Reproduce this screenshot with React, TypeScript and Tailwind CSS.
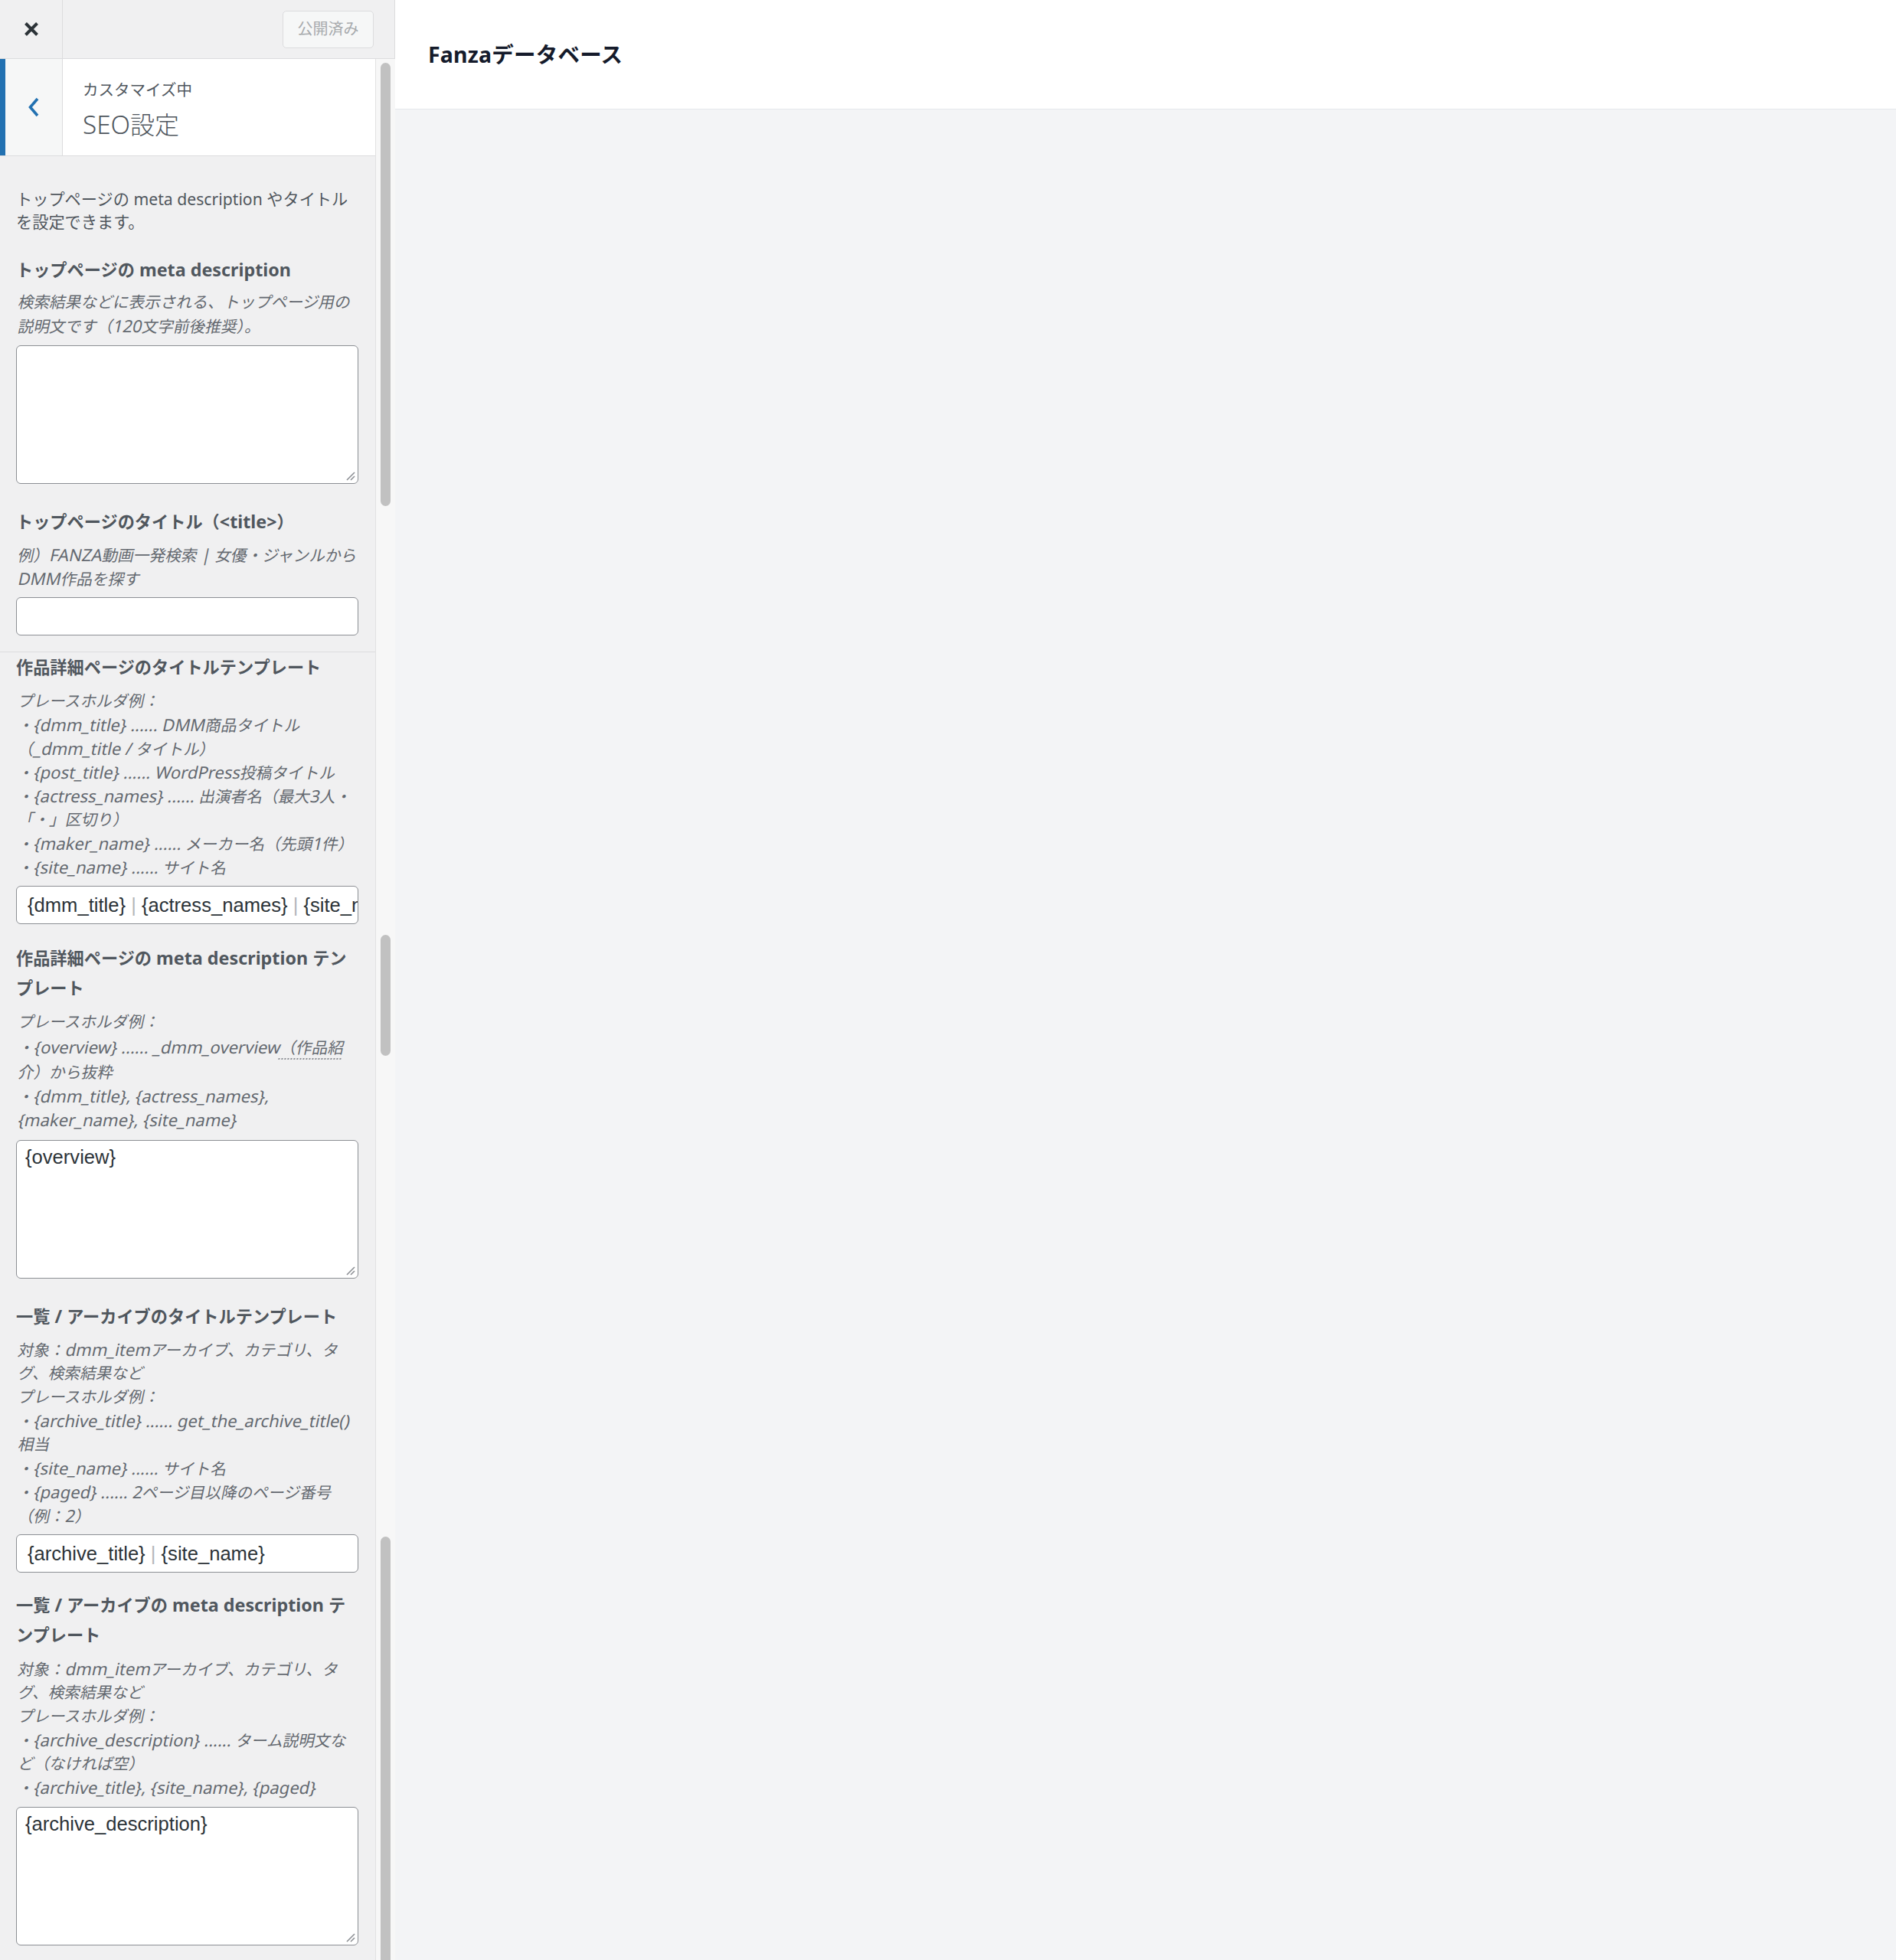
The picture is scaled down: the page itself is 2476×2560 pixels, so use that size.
import React from "react";

const FONT = "font-['Noto_Sans','Noto_Sans_CJK_JP',sans-serif]";
const INPUT_FONT = "font-['Liberation_Sans','Noto_Sans_CJK_JP',sans-serif]";

/* Latin runs are drawn a little larger, as the reference's Japanese UI font sets them */
function Mixed({ text, latin }: { text: string; latin: string }) {
  const parts = text.split(/([\u0000-\u024F]+)/);
  return (
    <>
      {parts.map((p, i) =>
        p === "" ? null : /^[\u0000-\u024F]+$/.test(p) ? (
          <span key={i} className={latin}>
            {p}
          </span>
        ) : (
          <React.Fragment key={i}>{p}</React.Fragment>
        )
      )}
    </>
  );
}

function Heading({ lines, className = "" }: { lines: string[]; className?: string }) {
  return (
    <div className={`text-[22.2px] font-bold leading-[40px] text-[#50575e] ${className}`}>
      {lines.map((l, i) => (
        <div key={i} className="h-[40px] whitespace-nowrap">
          <Mixed text={l} latin="text-[1.05em]" />
        </div>
      ))}
    </div>
  );
}

/* synthetic oblique: upright face skewed, like the browser's fake italic */
function Line({ children, className = "h-[31px] leading-[31px]" }: { children: React.ReactNode; className?: string }) {
  return <div className={`origin-bottom-left -skew-x-12 whitespace-nowrap ${className}`}>{children}</div>;
}

function Desc({ lines, className = "" }: { lines: string[]; className?: string }) {
  return (
    <div className={`mt-[8px] text-[20.7px] leading-[31px] text-[#646970] ${className}`}>
      {lines.map((l, i) => (
        <Line key={i}>
          <Mixed text={l} latin="text-[1.065em]" />
        </Line>
      ))}
    </div>
  );
}

function Sep() {
  return <span className="text-[#b4b7ba]">{"\u00a0|\u00a0"}</span>;
}

function TextInput({ children, className = "" }: { children?: React.ReactNode; className?: string }) {
  return (
    <div
      className={`mt-[9px] flex h-[50px] w-[447px] items-center overflow-hidden whitespace-nowrap rounded-[6px] border border-[#8c8f94] bg-white pl-[14px] text-[25.6px] text-[#2c3338] ${INPUT_FONT} ${className}`}
    >
      <span className="whitespace-nowrap">{children}</span>
    </div>
  );
}

function TextArea({ children, className = "" }: { children?: React.ReactNode; className?: string }) {
  return (
    <div
      className={`relative h-[181px] w-[447px] rounded-[6px] border border-[#8c8f94] bg-white px-[11px] pt-[6px] text-[25.6px] leading-[30px] text-[#2c3338] ${INPUT_FONT} ${className}`}
    >
      {children}
      <svg className="absolute bottom-[3px] right-[3px]" width="13" height="13" viewBox="0 0 13 13">
        <line x1="2" y1="12" x2="12" y2="2" stroke="#8c8f94" strokeWidth="1.6" />
        <line x1="7" y1="12" x2="12" y2="7" stroke="#8c8f94" strokeWidth="1.6" />
      </svg>
    </div>
  );
}

const L = "text-[1.065em]";

export default function App() {
  return (
    <div className={`flex h-[2560px] w-[2476px] overflow-hidden ${FONT}`}>
      {/* Sidebar */}
      <aside className="flex w-[516px] shrink-0 flex-col bg-[#f0f0f1]">
        {/* top bar */}
        <div className="flex h-[77px] shrink-0 items-center border-b border-r border-[#dcdcde] bg-[#f0f0f1]">
          <div className="flex h-full w-[82px] items-center justify-center border-r border-[#dcdcde]">
            <svg width="20" height="20" viewBox="0 0 20 20">
              <path d="M2.5 2.5 L17.5 17.5 M17.5 2.5 L2.5 17.5" stroke="#2c3338" strokeWidth="4" strokeLinecap="butt" />
            </svg>
          </div>
          <div className="flex-1" />
          <div className="mr-[27px] flex h-[49px] w-[119px] items-center justify-center rounded-[5px] border border-[#dcdcde] bg-[#f6f7f7] text-[20px] text-[#a7aaad]">
            公開済み
          </div>
        </div>

        <div className="flex min-h-0 flex-1">
          {/* content column */}
          <div className="flex w-[490px] shrink-0 flex-col">
            {/* section header */}
            <div className="flex h-[127px] shrink-0 border-b border-[#dcdcde] bg-white">
              <div className="flex w-[82px] items-center justify-center border-l-[7px] border-r border-l-[#2271b1] border-r-[#dcdcde] bg-[#f6f7f7]">
                <svg width="16" height="26" viewBox="0 0 16 26">
                  <path d="M13 2 L3.5 13 L13 24" fill="none" stroke="#2271b1" strokeWidth="3.6" />
                </svg>
              </div>
              <div className="flex flex-col pl-[26px] pt-[26px]">
                <div className="h-[28px] whitespace-nowrap text-[20.5px] leading-[28px] text-[#50575e]">カスタマイズ中</div>
                <div className="mt-[11px] h-[40px] whitespace-nowrap text-[32px] font-light leading-[40px] text-[#50575e]">
                  <span className="text-[1.04em]">SEO</span>設定
                </div>
              </div>
            </div>

            {/* section A */}
            <div className="border-b border-[#dcdcde] pb-[21px] pl-[21px] pt-[41px]">
              <div className="text-[21.2px] leading-[30px] text-[#50575e]">
                <div className="h-[30px] whitespace-nowrap">トップページの meta description やタイトル</div>
                <div className="h-[30px] whitespace-nowrap">を設定できます。</div>
              </div>

              <Heading className="mt-[27px]" lines={["トップページの meta description"]} />
              <Desc
                className="!mt-[7px]"
                lines={["検索結果などに表示される、トップページ用の", "説明文です（120文字前後推奨）。"]}
              />
              <TextArea className="mt-[10px]" />

              <Heading className="mt-[29px]" lines={["トップページのタイトル（<title>）"]} />
              <Desc lines={["例）FANZA動画一発検索 | 女優・ジャンルから", "DMM作品を探す"]} />
              <TextInput />
            </div>

            {/* section B */}
            <div className="pl-[21px]">
              <Heading lines={["作品詳細ページのタイトルテンプレート"]} />
              <Desc
                lines={[
                  "プレースホルダ例：",
                  "・{dmm_title} ...... DMM商品タイトル",
                  "（_dmm_title / タイトル）",
                  "・{post_title} ...... WordPress投稿タイトル",
                  "・{actress_names} ...... 出演者名（最大3人・",
                  "「・」区切り）",
                  "・{maker_name} ...... メーカー名（先頭1件）",
                  "・{site_name} ...... サイト名",
                ]}
              />
              <TextInput>
                {"{dmm_title}"}
                <Sep />
                {"{actress_names}"}
                <Sep />
                {"{site_name}"}
              </TextInput>

              <Heading className="mt-[24px]" lines={["作品詳細ページの meta description テン", "プレート"]} />
              <div className="mt-[8px] text-[20.7px] text-[#646970]">
                <Line>プレースホルダ例：</Line>
                <Line className="h-[35px] leading-[35px]">
                  ・<span className={L}>{"{overview} ...... _dmm_overview"}</span>
                  <span className="underline decoration-[#8c8f94] decoration-dotted decoration-2 underline-offset-[6px]">（作品紹</span>
                </Line>
                <Line>介）から抜粋</Line>
                <Line>
                  ・<span className={L}>{"{dmm_title}, {actress_names},"}</span>
                </Line>
                <Line>
                  <span className={L}>{"{maker_name}, {site_name}"}</span>
                </Line>
              </div>
              <TextArea className="mt-[11px]">{"{overview}"}</TextArea>

              <Heading className="mt-[29px]" lines={["一覧 / アーカイブのタイトルテンプレート"]} />
              <Desc
                lines={[
                  "対象：dmm_itemアーカイブ、カテゴリ、タ",
                  "グ、検索結果など",
                  "プレースホルダ例：",
                  "・{archive_title} ...... get_the_archive_title()",
                  "相当",
                  "・{site_name} ...... サイト名",
                  "・{paged} ...... 2ページ目以降のページ番号",
                  "（例：2）",
                ]}
              />
              <TextInput>
                {"{archive_title}"}
                <Sep />
                {"{site_name}"}
              </TextInput>

              <Heading className="mt-[22px]" lines={["一覧 / アーカイブの meta description テ", "ンプレート"]} />
              <Desc
                lines={[
                  "対象：dmm_itemアーカイブ、カテゴリ、タ",
                  "グ、検索結果など",
                  "プレースホルダ例：",
                  "・{archive_description} ...... ターム説明文な",
                  "ど（なければ空）",
                  "・{archive_title}, {site_name}, {paged}",
                ]}
              />
              <TextArea className="mt-[10px]">{"{archive_description}"}</TextArea>
            </div>
          </div>

          {/* scrollbar track */}
          <div className="flex w-[26px] shrink-0 flex-col border-l border-[#e2e2e2] bg-[#f7f7f7] pl-[6px]">
            <div className="mt-[5px] h-[579px] w-[13px] rounded-full bg-[#c1c1c1]" />
            <div className="mt-[560px] h-[158px] w-[13px] rounded-full bg-[#c1c1c1]" />
            <div className="mt-[628px] w-[13px] flex-1 rounded-t-full bg-[#c1c1c1]" />
          </div>
        </div>
      </aside>

      {/* Preview */}
      <main className="flex min-w-0 flex-1 flex-col bg-[#f3f4f6]">
        <header className="flex h-[143px] shrink-0 items-center border-b border-[#e5e7eb] bg-white pl-[43px]">
          <h1 className="text-[28.5px] font-bold tracking-[0.2px] text-[#151b2b]">Fanzaデータベース</h1>
        </header>
        <div className="flex-1" />
      </main>
    </div>
  );
}
